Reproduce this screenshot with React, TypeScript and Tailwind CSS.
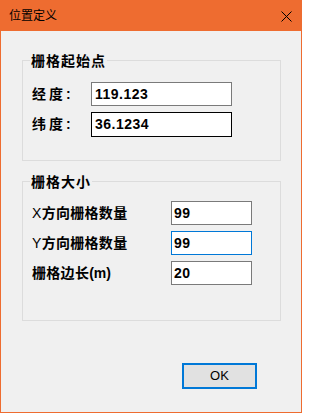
import React from 'react';

const cjk = "font-['Liberation_Sans','Noto_Sans_CJK_SC',sans-serif]";

function GroupBox({ title, className, children }: { title: string; className?: string; children: React.ReactNode }) {
  return (
    <div className={`border border-[#dcdcdc] ${className ?? ''}`}>
      <div className="mt-[-8px] ml-[7px] flex">
        <span className={`${cjk} bg-[#f0f0f0] px-[1px] text-[14px] leading-[16px] font-bold tracking-[1px] text-black`}>
          {title}
        </span>
      </div>
      {children}
    </div>
  );
}

function Field({ value, className }: { value: string; className?: string }) {
  return (
    <div
      className={`flex h-[24px] items-center bg-white border font-['Liberation_Sans',sans-serif] text-[14px] font-bold tracking-[0.5px] text-black ${className ?? ''}`}
    >
      {value}
    </div>
  );
}

export default function App() {
  return (
    <div className="w-[302px] h-[413px] flex flex-col bg-[#f0f0f0] border-x border-b border-[#ee6c30]">
      {/* Title bar */}
      <div className="h-[31px] -mx-[1px] flex items-center justify-between bg-[#ee6c30] pl-[9px] pr-[10px]">
        <span className={`${cjk} text-[12px] leading-[14px] text-black`}>位置定义</span>
        <svg width="11" height="11" viewBox="0 0 11 11" className="mt-[1px]">
          <path d="M0.5 0.5 L10.5 10.5 M10.5 0.5 L0.5 10.5" stroke="#000" strokeWidth="1" fill="none" />
        </svg>
      </div>

      <div className="flex flex-col pl-[21px] pt-[29px]">
        <GroupBox title="栅格起始点" className="w-[259px] h-[101px]">
          <div className="flex flex-col gap-[6px] mt-[13px] pl-[9px]">
            <div className="flex items-center">
              <span className={`${cjk} w-[59px] text-[14px] font-bold tracking-[3px] text-black`}>经度:</span>
              <Field value="119.123" className="w-[141px] border-[#7a7a7a] pl-[3px]" />
            </div>
            <div className="flex items-center">
              <span className={`${cjk} w-[59px] text-[14px] font-bold tracking-[3px] text-black`}>纬度:</span>
              <Field value="36.1234" className="w-[141px] h-[25px] border-black pl-[3px]" />
            </div>
          </div>
        </GroupBox>

        <GroupBox title="栅格大小" className="w-[259px] h-[140px] mt-[20px]">
          <div className="flex flex-col gap-[6px] mt-[11px] pl-[9px]">
            <div className="flex items-center">
              <span className={`${cjk} w-[139px] text-[14px] font-bold tracking-[0.3px] text-black`}>
                <span className="font-normal">X</span>方向栅格数量
              </span>
              <Field value="99" className="w-[81px] border-[#7a7a7a] pl-[2px]" />
            </div>
            <div className="flex items-center">
              <span className={`${cjk} w-[139px] text-[14px] font-bold tracking-[0.3px] text-black`}>
                <span className="font-normal">Y</span>方向栅格数量
              </span>
              <Field value="99" className="w-[81px] border-[#0078d7] pl-[2px]" />
            </div>
            <div className="flex items-center">
              <span className={`${cjk} w-[139px] text-[14px] font-bold tracking-[0.3px] text-black`}>
                栅格边长<span className="tracking-normal">(m)</span>
              </span>
              <Field value="20" className="w-[81px] border-[#7a7a7a] pl-[2px]" />
            </div>
          </div>
        </GroupBox>
      </div>

      <div className="flex justify-end pr-[44px] mt-[42px]">
        <button className="w-[75px] h-[26px] flex items-center justify-center border-2 border-[#0078d7] bg-[#e1e1e1] font-['Liberation_Sans',sans-serif] text-[13px] text-black">
          OK
        </button>
      </div>
    </div>
  );
}
